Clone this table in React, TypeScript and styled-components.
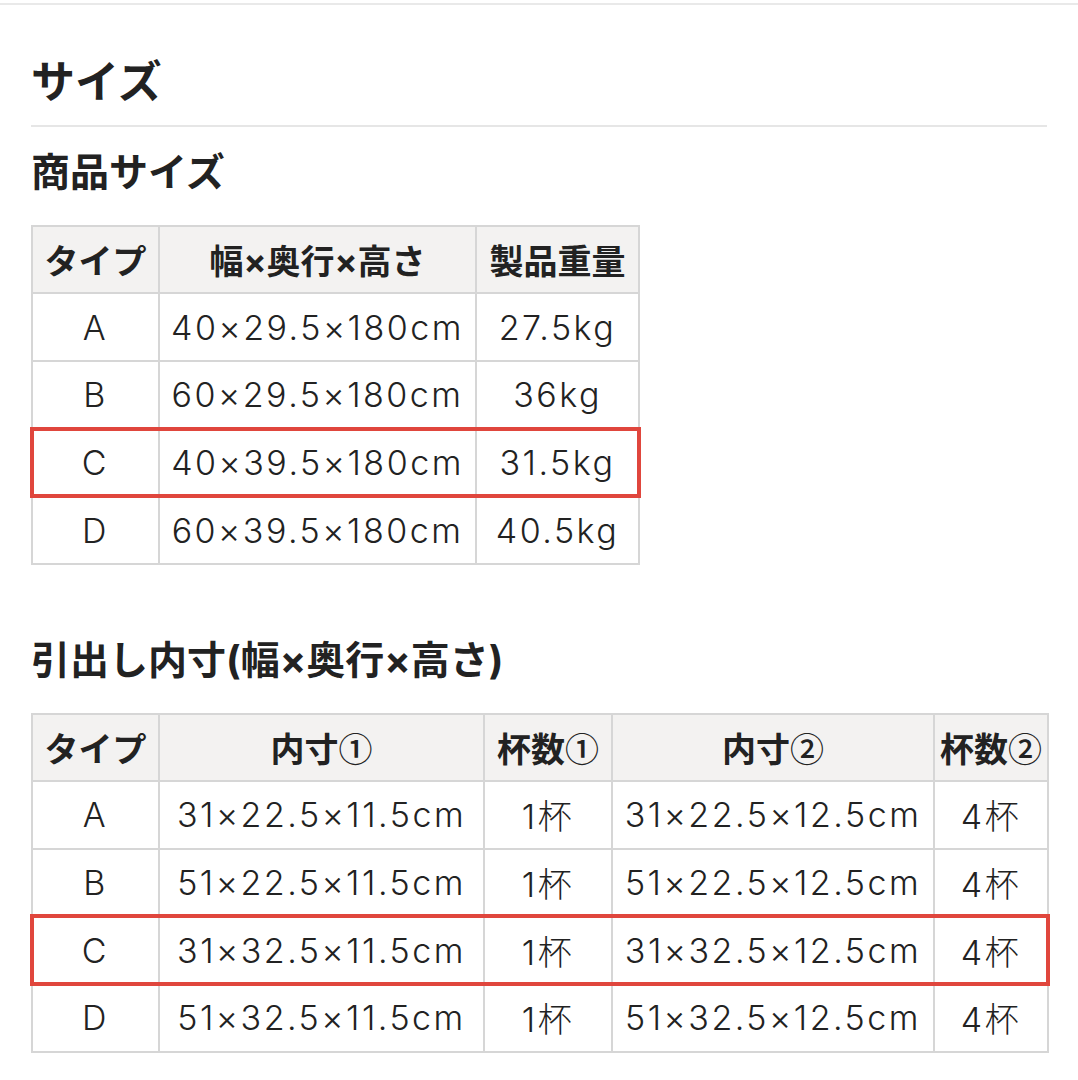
import styled, { createGlobalStyle } from "styled-components";

const GlobalStyle = createGlobalStyle`
  body {
    margin: 0;
    background: #ffffff;
    color: #222222;
    font-family: "Noto Sans CJK JP", sans-serif;
  }
`;

const Page = styled.main`
  border-top: 2px solid #e9e9e9;
  margin-top: 3px;
  padding: 0 31px 40px;
`;

const Title = styled.h2`
  margin: 0;
  padding: 46px 0 17px;
  font-size: 44px;
  line-height: 1.3;
  font-weight: 700;
  border-bottom: 2px solid #e6e6e6;
`;

const SubTitle = styled.h3<{ $top: number }>`
  margin: 0;
  padding: ${(p) => p.$top}px 0 27px;
  font-family: "Inter", "Noto Sans CJK JP", sans-serif;
  font-size: 39px;
  line-height: 1.3;
  font-weight: 700;
`;

const Table = styled.table`
  border-collapse: collapse;
  table-layout: fixed;
  font-family: "Inter", "Noto Sans CJK JP", sans-serif;
`;

const HeadCell = styled.th`
  height: 65.6px;
  padding: 0 4px;
  border: 2px solid #d6d6d6;
  background: #f3f2f1;
  font-size: 34px;
  font-weight: 700;
  text-align: center;
  white-space: nowrap;
  overflow: hidden;
`;

const Circled = styled.span`
  font-family: "Noto Sans CJK JP", sans-serif;
  font-weight: 500;
`;

const Cell = styled.td`
  height: 65.6px;
  padding: 0 2px;
  border: 2px solid #d6d6d6;
  font-size: 34px;
  font-weight: 300;
  letter-spacing: 2.5px;
  text-align: center;
  white-space: nowrap;
  overflow: hidden;
`;

const Row = styled.tr<{ $marked?: boolean }>`
  outline: ${(p) => (p.$marked ? "4px solid #e0463d" : "none")};
  outline-offset: -2px;
`;

type Spec = { widths: number[]; head: string[]; rows: string[][] };

const productSize: Spec = {
  widths: [127, 317, 163],
  head: ["タイプ", "幅×奥行×高さ", "製品重量"],
  rows: [
    ["A", "40×29.5×180cm", "27.5kg"],
    ["B", "60×29.5×180cm", "36kg"],
    ["C", "40×39.5×180cm", "31.5kg"],
    ["D", "60×39.5×180cm", "40.5kg"],
  ],
};

const drawerSize: Spec = {
  widths: [127, 325, 128, 322, 114],
  head: ["タイプ", "内寸①", "杯数①", "内寸②", "杯数②"],
  rows: [
    ["A", "31×22.5×11.5cm", "1杯", "31×22.5×12.5cm", "4杯"],
    ["B", "51×22.5×11.5cm", "1杯", "51×22.5×12.5cm", "4杯"],
    ["C", "31×32.5×11.5cm", "1杯", "31×32.5×12.5cm", "4杯"],
    ["D", "51×32.5×11.5cm", "1杯", "51×32.5×12.5cm", "4杯"],
  ],
};

// circled digits come out too heavy in Inter, so hand them to the CJK font
const headLabel = (text: string) =>
  text.split(/([①②])/).map((part, i) =>
    /[①②]/.test(part) ? <Circled key={i}>{part}</Circled> : part
  );

const SizeTable = ({ spec }: { spec: Spec }) => (
  <Table style={{ width: spec.widths.reduce((a, b) => a + b, 0) }}>
    <colgroup>
      {spec.widths.map((w, i) => (
        <col key={i} style={{ width: w }} />
      ))}
    </colgroup>
    <thead>
      <tr>
        {spec.head.map((h) => (
          <HeadCell key={h}>{headLabel(h)}</HeadCell>
        ))}
      </tr>
    </thead>
    <tbody>
      {spec.rows.map((r) => (
        <Row key={r[0]} $marked={r[0] === "C"}>
          {r.map((c, i) => (
            <Cell key={i}>{c}</Cell>
          ))}
        </Row>
      ))}
    </tbody>
  </Table>
);

export default function App() {
  return (
    <>
      <GlobalStyle />
      <Page>
        <Title>サイズ</Title>
        <SubTitle $top={20}>商品サイズ</SubTitle>
        <SizeTable spec={productSize} />
        <SubTitle $top={70}>引出し内寸(幅×奥行×高さ)</SubTitle>
        <SizeTable spec={drawerSize} />
      </Page>
    </>
  );
}
